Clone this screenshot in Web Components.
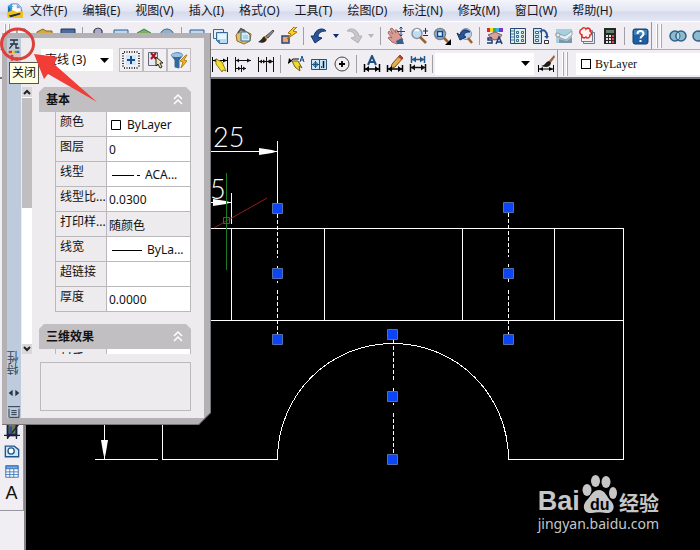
<!DOCTYPE html>
<html lang="zh-CN">
<head>
<meta charset="utf-8">
<title>CAD</title>
<style>
html, body { height: 100%; }
body {
  margin: 0; overflow: hidden; background: #f0eef2; color: #111;
  font-family: "Noto Sans", "Noto Sans CJK SC", sans-serif; font-size: 12px; line-height: 16px;
}
</style>
</head>
<body>
<cad-app></cad-app>
<script>
const ICONS = {
  logo: '<path d="M1 3h10l6 5v8H1z" fill="#2a62a8"/><path d="M5 1h7l4 4v7H5z" fill="#fff" stroke="#4f7fb4"/><path d="M11 1l5 5h-5z" fill="#7fa9d6"/><path d="M0 11l6-3 5 2 7-1v8H1z" fill="#f2c21c"/><path d="M2 14l13-3v2l-11 3z" fill="#1e2c48"/><path d="M4 1v7M1 4h6M2 2l4 4M6 2L2 6" stroke="#3fa0e6"/>',
  newfile: '<path d="M4 2h8l3 3v11H4z" fill="#fff" stroke="#557"/>',
  folder: '<path d="M1 5l6-3 3 2h6v10H1z" fill="#d8a93c" stroke="#846414"/>',
  disk: '<path d="M2 2h14v14H2z" fill="#4b6c9c" stroke="#1e3558"/>',
  print: '<path d="M2 8h14v6H2zM5 8V3h8v5" fill="#ccd" stroke="#445"/><circle cx="9" cy="5" r="4" fill="#aac" stroke="#445"/>',
  sheet: '<path d="M2 3h14v12H2z" fill="#bcd9f0" stroke="#2d5f8e"/>',
  publish: '<path d="M2 6l7-4 7 4v9H2z" fill="#7fae5a" stroke="#385"/>',
  globe: '<circle cx="9" cy="9" r="7" fill="#8fb0d0" stroke="#468"/>',
  copy: '<path d="M2.500 2.500h10v9h-10z" fill="#e3f0fa" stroke="#356a96"/><path d="M5.500 5.500h11v11h-8l-3-3z" fill="#b5dcf5" stroke="#356a96"/><path d="M7 7h8v5H7z" fill="#e6f5ff"/><path d="M5 13h4v4z" fill="#4783b0"/>',
  paste: '<path d="M2 8l5-6 10 5-1 7-6 3-7-3z" fill="#e3bf6e" stroke="#8d6b2a"/><path d="M7 5h6l3 3v6H7z" fill="#d4ecfa" stroke="#3a7190"/><path d="M4 6l3-4 4 2" fill="none" stroke="#555" stroke-width="2"/><path d="M9 9h5M9 11h5" stroke="#86b2cc"/>',
  brush: '<path d="M16 3l-7 6 2 2 6-7z" fill="#8c8c92" stroke="#4d4d55"/><path d="M8 9c-3 1-3 4-7 6 5 2 9 0 9-4z" fill="#30241f"/><path d="M8 9l2 3" stroke="#c08a44" stroke-width="2"/>',
  block: '<path d="M2 9h7v7H2z" fill="#f0a06c" stroke="#26477a" stroke-width="1.500"/><path d="M14 0L8 6l3 1-4 5 10-7-4-1 4-4z" fill="#ffcf24" stroke="#a27008"/>',
  undo: '<path d="M1 9l4 7 7-5-4-1c0-4 3-6 8-6-3-4-11-2-12 5z" fill="#28549a" stroke="#162f5e"/>',
  redo: '<path d="M17 9l-4 7-7-5 4-1c0-4-3-6-8-6 3-4 11-2 12 5z" fill="#c6c5cb" stroke="#b3b2b9"/>',
  caret: '<path d="M6 7h6l-3 4z" fill="#102c72"/>',
  caretoff: '<path d="M6 7h6l-3 4z" fill="#b5b4bc"/>',
  hand: '<path d="M1 6l1-2 4 3-3-5 2-1 4 5-1-3 2 0 3 5 3 5-6 4-5-2-4-4 1-1 3 1z" fill="#d99a94" stroke="#a66d68"/><path d="M9 14l6-3 2 6h-7z" fill="#345f91"/><path d="M14 0v9M10 4.500h8M12.500 1.500L14 0l1.500 1.500M12.500 7.500L14 9l1.500-1.500" fill="none" stroke="#1d4677"/>',
  zoom: '<circle cx="7" cy="6.500" r="5" fill="#bedcf2" stroke="#8b94a2" stroke-width="1.500"/><path d="M5 4c2-2 4 0 4 0" stroke="#fff" stroke-width="2" fill="none"/><path d="M10 10l6 6" stroke="#9b612f" stroke-width="2.500"/><path d="M13 4h5M15.500 1v6M13 8.500h5" stroke="#132f5a"/>',
  zoomwin: '<circle cx="7" cy="7" r="5.500" fill="#9fbddd" stroke="#7b838f" stroke-width="1.500"/><path d="M4.500 4.500h5v5h-5z" fill="#e4f0fb" stroke="#164786" stroke-width="1.500"/><path d="M11 11l4 4" stroke="#9b612f" stroke-width="2.500"/><path d="M18 12v6h-6z" fill="#000"/>',
  zoomprev: '<circle cx="10" cy="7" r="5.500" fill="#b5d3ea" stroke="#8894a4"/><path d="M12 11l4 5" stroke="#9b612f" stroke-width="2.500"/><path d="M1 6l3 7 6-3-2-1c0-3 2-4 6-4-4-4-9-2-10 3z" fill="#28549a" stroke="#162f5e"/>',
  palette: '<path d="M1 1h3v4H1z" fill="#e3242c"/><path d="M4 1h3v4H4z" fill="#f8dc1b"/><path d="M7 1h3v4H7z" fill="#35b54c"/><path d="M10 1h3v4h-3z" fill="#2db7e2"/><path d="M13 1h4v4h-4z" fill="#7d35d0"/><path d="M2 8l7-3 7 3-3 4-5 1z" fill="#dba29b" stroke="#885f5b"/><path d="M6 11H2v2h4v3H1M10 17l3-7 3 7M11 15h4" fill="none" stroke="#1e3c73" stroke-width="1.500"/>',
  design: '<path d="M1.500 1.500h15v15h-15z" fill="#deeeea" stroke="#244871"/><path d="M5.500 2v14M2 4h3M2 7h3M2 10h3M2 13h3" stroke="#427396"/><path d="M7.500 4.500h2v2h-2zM12.500 4.500h2v2h-2zM7.500 8.500h2v2h-2zM12.500 8.500h2v2h-2zM7.500 12.500h2v2h-2zM12.500 12.500h2v2h-2z" fill="none" stroke="#356a91"/>',
  tools: '<path d="M1.500 1.500h8v15h-8z" fill="#cce5f0" stroke="#244871"/><path d="M3.500 4.500h3v2h-3zM3.500 8.500h3v2h-3zM3.500 12.500h3v2h-3z" fill="#fff" stroke="#356a91"/><path d="M8 5c4-4 7 0 7 4" fill="none" stroke="#28549a" stroke-width="2"/><path d="M12 9h5l-2 3z" fill="#28549a"/><path d="M12.500 13.500h4v3h-4z" fill="#fff" stroke="#333"/>',
  sheets: '<path d="M1 2h16v14H1z" fill="#a8cfe0"/><path d="M1 6l9 3 7-5v4l-6 5L1 9z" fill="#e7f0f2" stroke="#90a6b0"/><path d="M4 12l8 2 5-4v6H4z" fill="#7c98a8"/><circle cx="3" cy="8" r="2" fill="#eee" stroke="#999"/>',
  markup: '<path d="M5.500 5.500h11v11h-11z" fill="#e9eef4" stroke="#70788a"/><path d="M3.500 3.500h11v11h-11z" fill="#f7f2f3" stroke="#70788a"/><path d="M4 2c1-2 4-1 4 0 2-2 5 0 4 2 2 1 2 4 0 4 0 3-3 4-4 2-2 2-5 0-4-2-3-1-3-5 0-6z" fill="#fff4f2" stroke="#df2829" stroke-width="1.500"/>',
  calc: '<path d="M3 1h12v16H3z" fill="#262629"/><path d="M5 3h8v3H5z" fill="#5f8464"/><path d="M5 8h2v2H5zM8 8h2v2H8zM5 11h2v2H5zM8 11h2v2H8zM5 14h2v2H5zM8 14h2v2H8z" fill="#e4e4e4"/><path d="M11 8h2v2h-2zM11 11h2v2h-2zM11 14h2v2h-2z" fill="#e44c45"/>',
  help: '<rect x="2" y="2" width="15" height="15" rx="2" fill="#1f5f9f" stroke="#133f72"/><path d="M3 3h13v5H3z" fill="#3d80bd"/><path d="M6.500 7c0-4 6-4 6 0 0 2-3 2-3 4.500M9.500 13v2" fill="none" stroke="#fff" stroke-width="2"/>',
  union: '<g fill="#8fb9ce" stroke="#2c6286" stroke-width="1.500"><circle cx="6" cy="9" r="5"/><circle cx="12" cy="9" r="5"/></g><path d="M9 5a5 5 0 0 1 0 8 5 5 0 0 1 0-8z" fill="#b7d8e5" stroke="#2c6286"/>',
  subtract: '<g stroke="#2c6286" stroke-width="1.500"><circle cx="12" cy="9" r="5" fill="#fff"/><circle cx="6" cy="9" r="5" fill="#8fb9ce"/></g>',
  qdim: '<path d="M1.500 2v15M16.500 2v15M2 5.500h14" fill="none" stroke="#000"/><path d="M2 5.500l4-2v4zM16 5.500l-4-2v4z" fill="#000"/><path d="M5 4l6 3 4 9-3-1-1 2-6-8z" fill="#f6dd2b" stroke="#8b8015"/>',
  baseline: '<path d="M1.500 2v15M2 5.500h15M7.500 10v7M2 13.500h10" fill="none" stroke="#111"/><path d="M17 5.500l-4-2v4zM2 5.500l3-2v4zM7 13.500l-3-2v4zM12 13.500l-3-2v4z" fill="#111"/>',
  continue: '<path d="M1.500 2v15M9.500 2v15M16.500 2v15M2 6.500h14" fill="none" stroke="#111"/><path d="M2 6.500l3-2v4zM16 6.500l-3-2v4zM9 6.500l-3-2v4zM10 6.500l3-2v4z" fill="#111"/>',
  leader: '<path d="M1 8l5-4h6" fill="none" stroke="#000"/><path d="M1 9l1-6 3 3z" fill="#000"/><path d="M5 6h6l4 7-3-2 1 5-5-4z" fill="#f1d934" stroke="#6b6210"/><path d="M13 7l2-6 2 6M13 5h4" fill="none" stroke="#1b4d8c"/>',
  tolerance: '<path d="M1.500 4.500h15v10h-15z" fill="#c8e4f7" stroke="#1f5480"/><path d="M9.500 4v11M5.500 6v7M2 9.500h7" stroke="#1f5480"/><circle cx="5.500" cy="9.500" r="2" fill="none" stroke="#1f5480"/><path d="M13.500 6v7M11 12h1" stroke="#111" stroke-width="1.500"/>',
  center: '<circle cx="9" cy="9" r="7" fill="none" stroke="#444"/><path d="M9 6v6M6 9h6" stroke="#000" stroke-width="1.800"/>',
  dimtext: '<path d="M5 10L9 1l4 9M6 7h6" fill="none" stroke="#1d4f82" stroke-width="2"/><path d="M1.500 9v8M16.500 9v8M2 14h14" fill="none" stroke="#000" stroke-width="1.500"/><path d="M2 14l4-3v6zM16 14l-4-3v6z" fill="#000"/>',
  dimedit: '<path d="M14 0l3 3-8 9-4 1 1-4z" fill="#e4af51" stroke="#7c4f17"/><path d="M14 0l3 3-1 2-4-3z" fill="#b34130"/><path d="M1.500 10v7M16.500 10v7M2 14h14" fill="none" stroke="#000" stroke-width="1.500"/><path d="M2 14l4-3v6zM16 14l-4-3v6z" fill="#000"/>',
  dimupdate: '<path d="M2.500 1v7M15.500 1v7M3 4.500h12" stroke="#275888" stroke-width="1.500"/><path d="M3 4.500l4-3v6zM15 4.500l-4-3v6z" fill="#275888"/><path d="M1.500 9v8M16.500 9v8M2 12.500h14" stroke="#111" stroke-width="1.500"/><path d="M2 12.500l4-3v6zM16 12.500l-4-3v6z" fill="#111"/>',
  dimstyle: '<path d="M17 0l-6 7 2 2 5-7z" fill="#a0643a"/><path d="M12 6c-4 1-3 4-8 5 6 2 9 1 10-3z" fill="#1f1a18"/><path d="M1.500 10v7M16.500 10v7M2 14h14" stroke="#000"/><path d="M2 14l4-2v4zM16 14l-4-2v4z" fill="#000"/>',
  hatch: '<path d="M3 0h12v15H3z" fill="#222a45"/><path d="M5 2h8v10H5z" fill="#6a7b54"/><path d="M0 14h18M4 0v18M14 0v18M17 1L4 17" fill="none" stroke="#15203e" stroke-width="1.500"/><path d="M6 4h3v8H6z" fill="#2c4da0"/>',
  region: '<path d="M1.500 3.500h10l5 4v8h-15z" fill="#cfe6f6" stroke="#1f568b" stroke-width="1.500"/><circle cx="8" cy="9" r="3.500" fill="#fff" stroke="#1f568b" stroke-width="1.500"/>',
  grid: '<path d="M2 3h14v13H2z" fill="#fff" stroke="#3064a4"/><path d="M2 3h14v4H2z" fill="#3c77bf"/><path d="M2 10h14M2 13h14M6.500 6v10M11 6v10" stroke="#3e77b8"/><path d="M3 4h12v2H3z" fill="#78aae0"/>',
  pin: '<path d="M3 3h12M9 3v6M3 9h12M2 16l5-6M12 10v6M12 15h5" fill="none" stroke="#26313d" stroke-width="2"/>',
  swatches: '<path d="M1 1h5v4H1z" fill="#e3362c"/><path d="M6 1h4v4H6z" fill="#f2cb22"/><path d="M10 1h3v4h-3z" fill="#35b54c"/><path d="M13 1h4v4h-4z" fill="#3b64cc"/><path d="M3 5h14v11H3z" fill="#e6bcb4"/><path d="M4 7h4v9H4zM11 11h4v5h-4z" fill="#b54a60"/>',
  move: '<path d="M7 4v10L1 9zM11 4v10l6-5z" fill="#26374a"/>',
  menu: '<path d="M1.500 4v13M16.500 4v13H2M0 1h18" fill="none" stroke="#26374a" stroke-width="1.500"/><path d="M5 7h8M5 10h8M5 13h8" stroke="#26374a" stroke-width="1.500"/>',
  pickadd: '<path d="M2 1h15M2 17h15M1 2v15M17 2v15" fill="none" stroke="#000" stroke-width="1.500" stroke-dasharray="1 1.500"/><path d="M4 4h10v10H4z" fill="#d3e7f8"/><path d="M9 5v8M5 9h8" stroke="#164e91" stroke-width="2"/>',
  pick: '<path d="M2.500 1.500h9v13h-9z" fill="#e3eaf3" stroke="#667"/><path d="M5 2l5 6M10 2L5 8" stroke="#a51521" stroke-width="2"/><path d="M10 6v9l2-2 2 4 2-1-2-4h3z" fill="#f4e9b0" stroke="#222"/>',
  filter: '<path d="M1 4c3-3 10-3 12 0l-4 5v8l-4-1V9z" fill="#2f6ba0" stroke="#396a95"/><ellipse cx="7" cy="4" rx="6" ry="2" fill="#9cc2e4"/><path d="M16 4l-6 6 3 1-2 6 6-7-3-1 3-5z" fill="#f2b51b" stroke="#b5831c"/>'
};

const define = (name, html, setup) => {
  const template = document.createElement("template");
  template.innerHTML = html;
  customElements.define(name, class extends HTMLElement {
    connectedCallback() {
      if (this.shadowRoot) return;
      const root = this.attachShadow({ mode: "open" });
      root.append(template.content.cloneNode(true));
      if (setup) setup(this, root);
    }
  });
};

define("cad-icon", `<style>:host{display:block;width:18px;height:18px;flex:none}svg{display:block;width:100%;height:100%}</style>
<svg viewBox="0 0 18 18" aria-hidden="true"></svg>`, (host, root) => {
  root.querySelector("svg").innerHTML = ICONS[host.getAttribute("name")];
});

define("cad-button", `<style>
:host{display:block;flex:none;width:23px;height:23px}
:host([narrow]){width:12px}
button{display:flex;align-items:center;justify-content:center;box-sizing:border-box;width:100%;height:100%;padding:0;border:0;background:none}
:host([boxed]){width:24px;height:24px}
:host([boxed]) button{border:1px solid #bfbdc2;background:#f1eff2}
</style><button type="button"></button>`, (host, root) => {
  const name = host.getAttribute("icon");
  const button = root.querySelector("button");
  button.setAttribute("aria-label", name);
  button.innerHTML = `<cad-icon name="${name}"></cad-icon>`;
});

define("cad-divider", `<style>:host{display:flex;flex:none;width:7px;height:18px;justify-content:center}i{width:1px;background:#a09ea6}</style><i></i>`);

define("cad-grip", `<style>:host{display:flex;flex:none;gap:2px;height:24px}i{width:2px;background:#fff;border-right:1px solid #aaa8b0;box-sizing:border-box}</style><i></i><i></i>`);

define("cad-toolbar", `<style>
:host{display:flex;align-items:center;box-sizing:border-box;border-right:1px solid #96949c;flex:none;height:27px}
:host([open]){border-right:0;flex:1;min-width:0;overflow:hidden}
</style><slot></slot>`, host => {
  const tokens = (host.getAttribute("tools") || "").split(" ").filter(Boolean);
  host.insertAdjacentHTML("afterbegin", tokens.map(t =>
    t === "|" ? "<cad-divider></cad-divider>" :
    `<cad-button icon="${t}" ${t.startsWith("caret") ? "narrow" : ""}></cad-button>`).join(""));
});

define("cad-menu-bar", `<style>
:host{display:block;background:linear-gradient(#f4f5fb,#e3e6f3 50%,#d6daed 60%,#e4e7f4);border-bottom:1px solid #fff}
nav{display:flex;align-items:center;height:21px;padding-left:7px}
cad-icon{width:16px;height:16px;margin-right:7px}
button{padding:0;margin:0 15px 0 0;border:0;background:none;font:inherit;line-height:20px;color:#16161c;white-space:nowrap}
</style><nav><cad-icon name="logo"></cad-icon></nav>`, (host, root) => {
  root.querySelector("nav").insertAdjacentHTML("beforeend",
    ["文件(F)","编辑(E)","视图(V)","插入(I)","格式(O)","工具(T)","绘图(D)","标注(N)","修改(M)","窗口(W)","帮助(H)"]
      .map(t => `<button type="button">${t}</button>`).join(""));
});

define("cad-select", `<style>
:host{display:flex;align-items:center;position:relative;box-sizing:border-box;height:22px;background:#fff;flex:none}
select{appearance:none;flex:1;min-width:0;height:100%;border:0;padding:0 0 0 4px;background:none;font:inherit;color:inherit;border-radius:0}
svg{width:9px;height:5px;flex:none;margin-right:4px;pointer-events:none}
:host([bare]) svg{display:none}
</style><slot name="start"></slot><select><option></option></select><svg viewBox="0 0 9 5"><path d="M0 0h9L4.500 5z" fill="#000"/></svg>`, (host, root) => {
  root.querySelector("option").textContent = host.getAttribute("value") || "";
  root.querySelector("select").setAttribute("aria-label", host.getAttribute("label"));
});

define("cad-rail", `<style>
:host{display:block;width:26px;flex:none;background:#f0eef2;border-right:2px solid #85838a;box-sizing:border-box}
div{display:flex;flex-direction:column;align-items:center;width:24px;box-sizing:border-box;padding:342px 0 5px;border:solid #98969e;border-width:0 1px 1px 0}
button{display:flex;align-items:center;justify-content:center;width:22px;height:20px;padding:0;border:0;background:none}
cad-icon{width:16px;height:16px}
.text{height:24px;font:18px/24px "Liberation Sans",sans-serif;color:#111}
</style><div>
<button type="button" aria-label="hatch"><cad-icon name="hatch"></cad-icon></button>
<button type="button" aria-label="region"><cad-icon name="region"></cad-icon></button>
<button type="button" aria-label="grid"><cad-icon name="grid"></cad-icon></button>
<button type="button" class="text">A</button></div>`);

define("cad-drawing", `<style>
:host{display:block;flex:1;min-width:0;overflow:hidden;background:#000}
svg{display:block;width:674px;height:471px}
text{font-family:Lato,"Liberation Sans",sans-serif;font-weight:300;font-size:27px;fill:#fff}
</style>
<svg viewBox="26 79 674 471" fill="none" stroke-width="1">
<g stroke="#fff" shape-rendering="crispEdges">
<path d="M162.500 228.500h461M162.500 320.500h461M162.500 228.500v231h115M508.500 459.500h115v-231M231.500 229v92M324.500 229v92M462.500 229v92M554.500 229v92"/>
<path d="M95 459.500h63M104.500 400v60M200 151.500h77M277.500 141v62M200 202.500h31M231.500 193v31"/>
<path d="M277.500 459.500c0-64 51-116 115.500-116s115.500 52 115.500 116"/>
<path d="M277.500 214v44M508.500 213v44M393.500 340v41M277.500 290v45M508.500 290v45M393.500 413v42" stroke-dasharray="4 2"/>
<path d="M277.500 266v17M508.500 264v20M393.500 388v17" stroke-dasharray="3 2"/>
</g>
<g fill="#fff"><path d="M259 148l13 2 5 1.500-5 1.500-13 2zM213 199l13 2 5 1.500-5 1.500-13 2zM101 440h7l-2 12-1.500 7-1.500-7z"/></g>
<text x="213" y="147">25</text><text x="210" y="199">5</text>
<path d="M214 228l53-30" stroke="#8c1f1b"/>
<path d="M226.500 173v97M223.500 217.500h6v6h-6z" stroke="#1c7a27"/>
<g id="grips" fill="#0b45f5" stroke="#5470a8"></g>
</svg>`, (host, root) => {
  root.querySelector("#grips").innerHTML =
    [[277,208],[277,273],[277,339],[508,207],[508,273],[508,339],[392,334],[392,396],[392,459]]
      .map(([x, y]) => `<path d="M${x - 4.5} ${y - 4.5}h10v10h-10z"/>`).join("");
});

define("site-mark", `<style>
:host{display:block;position:absolute;right:41px;bottom:16px;color:#c6c6c6;font-family:"Noto Sans","Noto Sans CJK SC",sans-serif}
.brand{display:flex;align-items:flex-end;justify-content:space-between;height:40px}
b{font:bold 27px/25px "Liberation Sans",sans-serif}
.cn{font:bold 20px/22px "Noto Sans CJK SC",sans-serif}
svg{width:35px;height:40px}
svg text{font:bold 16px "Liberation Sans",sans-serif;fill:#000}
.site{font-size:14px;line-height:20px}
</style><div class="brand"><b>Bai</b>
<svg viewBox="0 0 35 40" fill="#c6c6c6"><ellipse cx="5" cy="16" rx="4.500" ry="6"/><ellipse cx="13.500" cy="7" rx="4.500" ry="6"/><ellipse cx="24" cy="8" rx="4.500" ry="6"/><ellipse cx="31" cy="19" rx="4" ry="6"/><path d="M17 16c6 0 8 7 11 10 7 6 3 14-4 13-5-1-9-1-14 0-8 1-11-7-5-13 4-4 6-10 12-10z"/><text x="8" y="36">du</text></svg>
<span class="cn">经验</span></div><div class="site">jingyan.baidu.com</div>`);

define("property-row", `<style>
:host{display:grid;grid-template-columns:51px 1fr;height:25px;box-sizing:border-box;border-bottom:1px solid #bab8bb}
label{padding:2px 0 0 4px;border-right:1px solid #bab8bb;line-height:16px;white-space:nowrap;overflow:hidden}
div{display:flex;align-items:center;min-width:0;background:#fff;padding:1px 0 0 2px}
:host([locked]) div{background:none}
input{flex:1;min-width:0;border:0;padding:0;background:none;font:inherit;color:inherit;height:22px}
svg{flex:none;height:12px;margin:0 5px 0 1px}
</style><label for="v"></label><div><input id="v"></div>`, (host, root) => {
  const input = root.querySelector("input");
  root.querySelector("label").textContent = host.getAttribute("label");
  input.value = host.getAttribute("value") || "";
  input.readOnly = host.hasAttribute("locked");
  const marks = {
    swatch: ["12", '<path d="M1.500 1.500h9v9h-9z"/>'],
    center: ["30", '<path d="M2 6.500h22M27 6.500h3"/>'],
    line: ["32", '<path d="M2 6.500h30"/>']
  };
  const mark = marks[host.getAttribute("mark")];
  if (mark) input.insertAdjacentHTML("beforebegin",
    `<svg width="${mark[0]}" viewBox="0 0 ${mark[0]} 12" fill="none" stroke="#000">${mark[1]}</svg>`);
});

define("property-section", `<style>
:host{display:block}
button{display:flex;align-items:center;justify-content:space-between;width:100%;height:25px;padding:0 8px 0 7px;border:0;background:#c1bfc2;font:inherit;font-weight:bold;color:#111;clip-path:polygon(0 5px,5px 0,calc(100% - 5px) 0,100% 5px,100% 100%,0 100%)}
.rows{margin-left:16px;border:solid #bab8bb;border-width:0 1px}
svg{width:10px;height:12px}
</style><button type="button"><span></span><svg viewBox="0 0 10 12" fill="none" stroke="#fff" stroke-width="1.500"><path d="M1 5l4-4 4 4M1 10l4-4 4 4"/></svg></button><div class="rows"><slot></slot></div>`, (host, root) => {
  root.querySelector("span").textContent = host.getAttribute("heading");
});

define("property-palette", `<style>
:host{display:block;position:absolute;left:2px;top:33px;width:209px;height:392px;background:#77757a;--cut:polygon(0 0,100% 0,100% calc(100% - 12px),calc(100% - 12px) 100%,0 100%);clip-path:var(--cut)}
.frame{display:flex;box-sizing:border-box;width:calc(100% - 1px);height:calc(100% - 1px);border:solid #b3b1b4;border-width:5px 6px 6px 5px;clip-path:var(--cut);background:#edebee}
aside{display:flex;flex-direction:column;align-items:center;width:14px;flex:none;background:#becbdc;font-size:12px}
aside cad-icon{width:12px;height:12px}
aside span{writing-mode:vertical-rl;transform:rotate(180deg);line-height:14px;color:#34465a;margin:auto 0 8px}
aside .low{margin:4px 0 3px}
aside .low:last-child{margin-bottom:0}
main{flex:1;min-width:0;display:flex;flex-direction:column}
.pick{display:flex;align-items:center;padding:10px 13px 0 20px}
cad-select{flex:1;margin-right:6px}
.scroll{display:flex;margin-top:15px;height:267px}
.bar{display:flex;flex-direction:column;width:10px;flex:none;margin:0 7px 0 1px;background:#fff}
.bar i{height:10px;background:#d9d7da;display:flex;align-items:center;justify-content:center}
.bar i svg{width:8px;height:6px}
.bar b{height:110px;margin:1px 0 auto;background:#c0bec1}
.list{flex:1;min-width:0;overflow:hidden;margin-right:13px}
property-section+property-section{margin-top:12px}
.note{height:47px;margin:8px 13px 0 19px;border:1px solid #bbb9bc}
</style><div class="frame"><aside><cad-icon name="pin"></cad-icon><cad-icon name="swatches"></cad-icon><span>特性</span><cad-icon class="low" name="move"></cad-icon><cad-icon class="low" name="menu"></cad-icon></aside>
<main><div class="pick"><cad-select value="直线 (3)" label="对象"></cad-select><cad-button boxed icon="pickadd"></cad-button><cad-button boxed icon="pick"></cad-button><cad-button boxed icon="filter"></cad-button></div>
<div class="scroll"><div class="bar"><i><svg viewBox="0 0 8 6"><path d="M1 5l3-3 3 3" fill="none" stroke="#222" stroke-width="2"/></svg></i><b></b><i><svg viewBox="0 0 8 6"><path d="M1 1l3 3 3-3" fill="none" stroke="#222" stroke-width="2"/></svg></i></div>
<div class="list"><property-section heading="基本">
<property-row label="颜色" value="ByLayer" mark="swatch"></property-row>
<property-row label="图层" value="0"></property-row>
<property-row label="线型" value="ACA..." mark="center"></property-row>
<property-row label="线型比..." value="0.0300"></property-row>
<property-row label="打印样..." value="随颜色" locked></property-row>
<property-row label="线宽" value="ByLa..." mark="line"></property-row>
<property-row label="超链接"></property-row>
<property-row label="厚度" value="0.0000"></property-row>
</property-section><property-section heading="三维效果"><property-row label="材质"></property-row></property-section></div></div>
<div class="note"></div></main></div>`);

define("tool-tip", `<style>:host{display:block;position:absolute;left:9px;top:62px;box-sizing:border-box;padding:1px 2px 2px;border:1px solid #55534c;background:#ffffe4;line-height:17px}</style><slot></slot>`);

define("callout-arrow", `<style>:host{display:block;position:absolute;left:0;top:26px;pointer-events:none}svg{display:block}</style>
<svg width="100" height="78" viewBox="0 26 100 78"><ellipse cx="17.500" cy="44" rx="16" ry="15" fill="none" stroke="#dc403c" stroke-width="3"/><path d="M34 54l24 3-4 7 43 38-49-28-4 5z" fill="#f23c36"/></svg>`);

define("cad-app", `<style>
:host{display:flex;flex-direction:column;position:relative;height:100vh;overflow:hidden}
.row{display:flex;align-items:center;height:27px;background:#f0eef2;border-bottom:1px solid #aeacb4;overflow:hidden;gap:4px}
.row.two{border-bottom:2px solid #77757c}
.work{display:flex;flex:1;min-height:0}
.one cad-grip:first-child{margin:0 -4px 0 4px}
.two cad-toolbar:first-child{padding-left:208px}
.style{flex:none;width:99px;margin-left:-1px}
.colour{flex:1;margin-left:4px;font-family:"Liberation Serif",serif;font-size:12px}
.swatch{width:8px;height:8px;border:1px solid #000;margin-left:5px}
</style><cad-menu-bar></cad-menu-bar>
<div class="row one"><cad-grip></cad-grip><cad-toolbar tools="newfile folder disk | print sheet publish globe | sheet copy paste brush block | undo caret redo caretoff | hand zoom zoomwin zoomprev | palette design tools sheets markup calc | help"></cad-toolbar><cad-grip></cad-grip><cad-toolbar open tools="union subtract"></cad-toolbar></div>
<div class="row two"><cad-toolbar tools="qdim baseline continue | leader tolerance center | dimtext dimedit dimupdate |"></cad-toolbar></div>
<div class="work"><cad-rail></cad-rail><cad-drawing></cad-drawing></div>
<site-mark></site-mark><property-palette></property-palette><tool-tip>关闭</tool-tip><callout-arrow></callout-arrow>`, (host, root) => {
  const dims = root.querySelector(".two cad-toolbar");
  dims.insertAdjacentHTML("beforeend", '<cad-select class="style" label="标注样式"></cad-select><cad-button icon="dimstyle"></cad-button>');
  dims.insertAdjacentHTML("afterend", '<cad-grip></cad-grip><cad-select class="colour" bare value="ByLayer" label="颜色"><span class="swatch" slot="start"></span></cad-select>');
});
</script>
</body>
</html>
